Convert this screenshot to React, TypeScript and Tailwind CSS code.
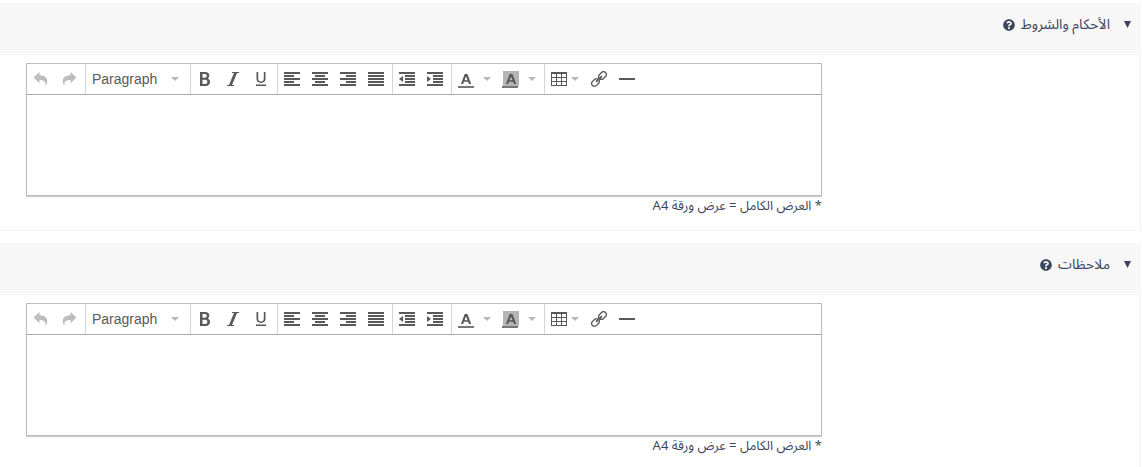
import type { ReactNode } from "react";
import { FaQuestionCircle } from "react-icons/fa";

const Icon = ({ children }: { children: ReactNode }) => (
  <svg viewBox="0 0 16 16" className="size-4 shrink-0" fill="currentColor" aria-hidden="true">
    {children}
  </svg>
);

const Caret = () => (
  <svg viewBox="0 0 8 4" className="h-1 w-2 shrink-0 text-[#b3b9be]" fill="currentColor" aria-hidden="true">
    <path d="M0 0h8L4 4z" />
  </svg>
);

const Group = ({ children }: { children: ReactNode }) => (
  <div className="flex items-center border-r border-[#d5d5d5] pr-0.5 last:border-r-0">{children}</div>
);

const Tool = ({ label, children, disabled }: { label: string; children: ReactNode; disabled?: boolean }) => (
  <button
    type="button"
    aria-label={label}
    disabled={disabled}
    className="flex h-7 w-7 items-center justify-center hover:bg-gray-100 disabled:text-[#bdbdbd]"
  >
    <Icon>{children}</Icon>
  </button>
);

const Toolbar = () => (
  <div className="flex min-h-[31px] flex-wrap border-b border-[#a8a8a8] text-[#595959]">
    <Group>
      <Tool label="Undo" disabled>
        <path d="M6.500 1v3.200c5 0 8.300 2.500 7.700 6.800-.2 1.500-.7 2.700-1.700 4 .7-4.200-1.500-6-6-6v3.200L.6 6.600z" />
      </Tool>
      <Tool label="Redo" disabled>
        <path d="M9.500 1v3.200c-5 0-8.300 2.500-7.700 6.800.2 1.500.7 2.700 1.700 4-.7-4.200 1.500-6 6-6v3.200l5.900-5.600z" />
      </Tool>
    </Group>

    <div className="relative flex items-center border-r border-[#d5d5d5]">
      <select
        aria-label="Block format"
        className="h-7 w-26 appearance-none bg-transparent pl-1.5 font-['Liberation_Sans',sans-serif] text-sm outline-none"
      >
        <option>Paragraph</option>
        <option>Heading 1</option>
        <option>Heading 2</option>
      </select>
      <span className="pointer-events-none absolute right-[11px]">
        <Caret />
      </span>
    </div>

    <Group>
      <Tool label="Bold">
        <path
          fillRule="evenodd"
          d="M3 1h5c2.800 0 4.300 1.300 4.300 3.600 0 1.400-.6 2.400-1.700 2.900 1.500.5 2.400 1.600 2.400 3.200 0 2.600-1.700 4.300-4.500 4.300H3zM5.500 3v3.700h2.200c1.400 0 2.100-.7 2.100-1.900S9.100 3 7.800 3zM5.500 8.700V13h2.600c1.500 0 2.300-.8 2.300-2.200s-.8-2.100-2.300-2.100z"
        />
      </Tool>
      <Tool label="Italic">
        <path d="M14 1v1h-2L7 14h2v1H2v-1h2L9 2H7V1z" />
      </Tool>
      <Tool label="Underline">
        <path d="M3 13.500h10V15H3zM3.500 1h1.700v6.500c0 2 1 3 2.800 3s2.800-1 2.800-3V1h1.700v6.600c0 2.900-1.700 4.400-4.500 4.400s-4.500-1.500-4.500-4.400z" />
      </Tool>
    </Group>

    <Group>
      <Tool label="Align left">
        <path d="M0 1h16v2H0zM0 4h10v2H0zM0 7h16v2H0zM0 10h10v2H0zM0 13h16v2H0z" />
      </Tool>
      <Tool label="Align center">
        <path d="M0 1h16v2H0zM3 4h10v2H3zM0 7h16v2H0zM3 10h10v2H3zM0 13h16v2H0z" />
      </Tool>
      <Tool label="Align right">
        <path d="M0 1h16v2H0zM6 4h10v2H6zM0 7h16v2H0zM6 10h10v2H6zM0 13h16v2H0z" />
      </Tool>
      <Tool label="Justify">
        <path d="M0 1h16v2H0zM0 4h16v2H0zM0 7h16v2H0zM0 10h16v2H0zM0 13h16v2H0z" />
      </Tool>
    </Group>

    <Group>
      <Tool label="Decrease indent">
        <path d="M0 1h16v2H0zM6 4h10v2H6zM6 7h10v2H6zM6 10h10v2H6zM0 13h16v2H0zM4 5v6L0 8z" />
      </Tool>
      <Tool label="Increase indent">
        <path d="M0 1h16v2H0zM6 4h10v2H6zM6 7h10v2H6zM6 10h10v2H6zM0 13h16v2H0zM0 5v6l4-3z" />
      </Tool>
    </Group>

    <Group>
      <ColorTool label="Text color">
        <path d="M0 15h16v2H0z" />
      </ColorTool>
      <ColorTool label="Background color">
        <path d="M0 0h16v15H0z" fill="#b5b5b5" />
        <path d="M-1 15h16v2H-1z" />
      </ColorTool>
    </Group>

    <Group>
      <button type="button" aria-label="Table" className="flex h-7 items-center gap-1 pr-1.5 pl-1.5 hover:bg-gray-100">
        <Icon>
          <path
            fillRule="evenodd"
            d="M0 1h16v14H0zM1 3v3h4V3zM6 3v3h4V3zM11 3v3h4V3zM1 7v3h4V7zM6 7v3h4V7zM11 7v3h4V7zM1 11v3h4v-3zM6 11v3h4v-3zM11 11v3h4v-3z"
          />
        </Icon>
        <Caret />
      </button>
      <Tool label="Insert link">
        <g transform="rotate(-45 8 8)" fill="none" stroke="currentColor" strokeWidth="1.300">
          <rect x="-1.200" y="5.200" width="8.400" height="5.600" rx="2.800" />
          <rect x="8.800" y="5.200" width="8.400" height="5.600" rx="2.800" />
          <path d="M4.500 8h7" strokeWidth="1.800" strokeLinecap="round" />
        </g>
      </Tool>
      <Tool label="Horizontal line">
        <path d="M0 7h16v2H0z" />
      </Tool>
    </Group>
  </div>
);

// letter on a colour swatch, with its own drop-down arrow
const ColorTool = ({ label, children }: { label: string; children: ReactNode }) => (
  <button type="button" aria-label={label} className="flex h-7 items-center gap-[9px] pr-1.5 pl-1.5 hover:bg-gray-100">
    <svg viewBox="0 0 16 17" className="h-[17px] w-4 shrink-0 overflow-visible" fill="#777" aria-hidden="true">
      {children}
      <path
        fill="#555"
        fillRule="evenodd"
        d="M6.700 3h2.700l3.800 10h-2.200l-.8-2.300H5.900L5.100 13H3zM8 5.200L6.500 9.200h3.100z"
      />
    </svg>
    <Caret />
  </button>
);

const Section = ({ title }: { title: string }) => (
  <section className="mb-3">
    <header className="flex h-[50px] items-center bg-[#f7f7f7] pr-2.5 pb-1.5">
      <button type="button" className="flex items-center gap-3.5">
        <svg viewBox="0 0 7 7" className="mb-0.5 size-[7px]" fill="currentColor" aria-hidden="true">
          <path d="M0 0h7L3.500 7z" />
        </svg>
        <span className="text-sm leading-5">{title}</span>
      </button>
      <button type="button" aria-label="مساعدة" className="mr-1.5">
        <FaQuestionCircle className="size-3" />
      </button>
    </header>

    <div className="mt-px flex justify-end border border-l-0 border-[#f3f3f3] pt-2 pr-6 pb-3.5 pl-[26px]">
      <div className="w-full max-w-[796px]">
        <div dir="ltr" className="border border-[#bdbdbd] bg-white shadow-[0_1px_1px_rgba(0,0,0,0.2)]">
          <Toolbar />
          <textarea aria-label={title} className="block h-[100px] w-full resize-none p-2 text-sm outline-none" />
        </div>
        <p className="text-[13px] leading-5">* العرض الكامل = عرض ورقة A4</p>
      </div>
    </div>
  </section>
);

const App = () => {
  return (
    <main
      dir="rtl"
      className="overflow-hidden bg-white pt-[3px] pr-px font-['Noto_Sans_Arabic','DejaVu_Sans',sans-serif] text-[#3b465e]"
    >
      <Section title="الأحكام والشروط" />
      <Section title="ملاحظات" />
    </main>
  );
};

export default App;
